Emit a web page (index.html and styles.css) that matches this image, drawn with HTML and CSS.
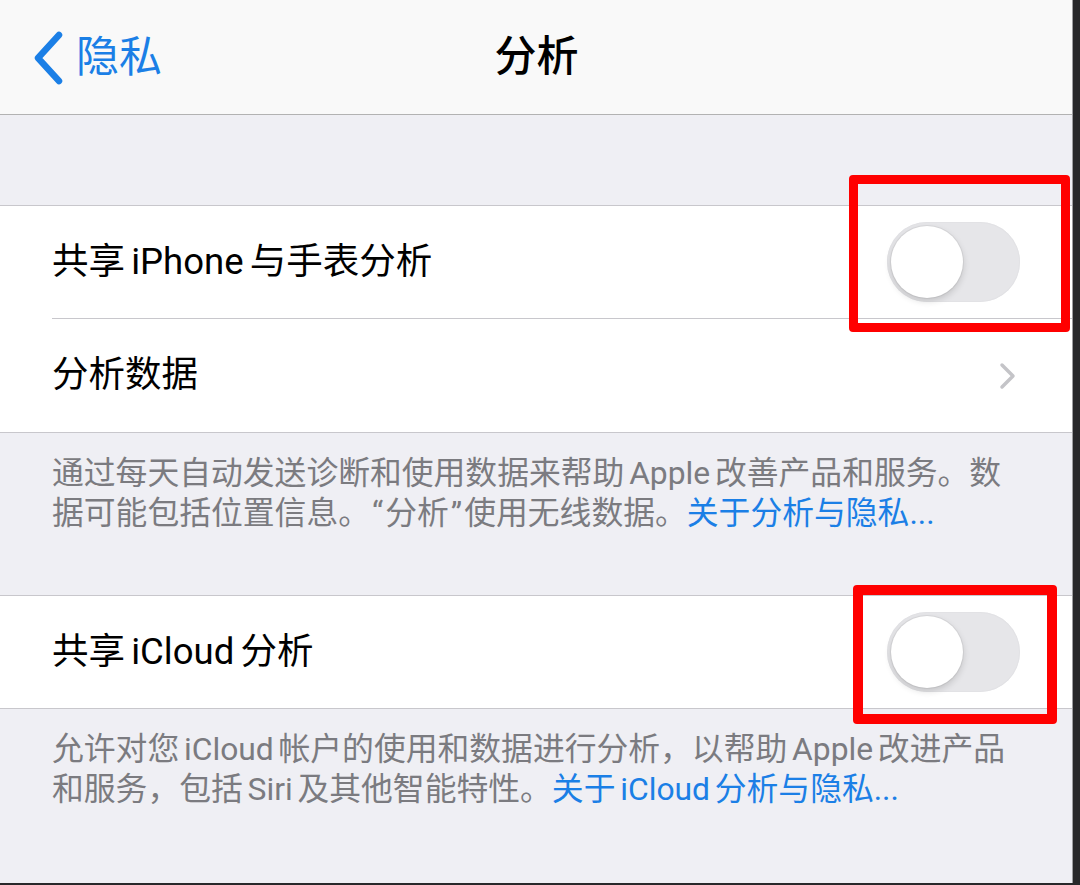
FILE: index.html
```html
<!DOCTYPE html>
<html lang="zh-CN">
<head>
<meta charset="utf-8">
<title>分析</title>
<link rel="stylesheet" href="styles.css">
</head>
<body>
<div class="screen">
  <header class="nav">
    <div class="back">
      <svg class="back-icon" width="32" height="54" viewBox="0 0 32 54"><path d="M27 4 L6 27 L27 50" fill="none" stroke="#1b7fe6" stroke-width="6.5" stroke-linecap="round" stroke-linejoin="round"/></svg>
      <span>隐私</span>
    </div>
    <div class="title">分析</div>
    <div></div>
  </header>
  <div class="spacer"></div>
  <section class="group">
    <div class="row">
      <span>共享<span class="lat">iPhone</span>与手表分析</span>
      <div class="switch"><div class="knob"></div></div>
    </div>
    <div class="row row-tall">
      <span>分析数据</span>
      <svg class="chev" width="18" height="28" viewBox="0 0 18 28"><path d="M3 3 L14 14 L3 25" fill="none" stroke="#c4c4c8" stroke-width="3.5" stroke-linecap="round" stroke-linejoin="round"/></svg>
    </div>
  </section>
  <p class="footer footer-1">通过每天自动发送诊断和使用数据来帮助<span class="lat">Apple</span>改善产品和服务。数<br>据可能包括位置信息。<span class="quote">“</span>分析<span class="quote">”</span>使用无线数据。<span class="link">关于分析与隐私...</span></p>
  <section class="group">
    <div class="row">
      <span>共享<span class="lat">iCloud</span>分析</span>
      <div class="switch"><div class="knob"></div></div>
    </div>
  </section>
  <p class="footer footer-2">允许对您<span class="lat">iCloud</span>帐户的使用和数据进行分析，以帮助<span class="lat">Apple</span>改进产品<br>和服务，包括<span class="lat">Siri</span>及其他智能特性。<span class="link">关于<span class="lat">iCloud</span>分析与隐私...</span></p>

  <div class="mark mark-1"></div>
  <div class="mark mark-2"></div>
</div>
</body>
</html>
```
FILE: styles.css
```css
html, body {
  margin: 0;
  padding: 0;
}
body {
  background: #28282a;
  width: 1080px;
  height: 885px;
  overflow: hidden;
}
.screen {
  position: relative;
  width: 1072px;
  height: 883px;
  background: #efeff4;
  border-right: 1px solid #9d9da0;
  overflow: hidden;
  font-family: "Roboto", "Noto Sans CJK SC", sans-serif;
  color: #000;
}
.nav {
  height: 114px;
  background: #f9f9f9;
  border-bottom: 1px solid #b2b2b2;
  display: grid;
  grid-template-columns: 1fr auto 1fr;
  align-items: center;
}
.back {
  display: flex;
  align-items: center;
  gap: 12px;
  padding-left: 32px;
  color: #1b7fe6;
  font-size: 43px;
  line-height: 1;
}
.back-icon {
  display: block;
  margin-top: 1px;
}
.title {
  font-size: 42px;
  font-weight: 500;
  line-height: 1;
  padding-left: 1px;
}
.spacer {
  height: 90px;
}
.group {
  background: #fff;
  border-top: 1px solid #c8c7cc;
  border-bottom: 1px solid #c8c7cc;
  padding-left: 52px;
}
.row {
  height: 112px;
  display: flex;
  align-items: center;
  justify-content: space-between;
  padding-right: 52px;
  font-size: 36.5px;
  line-height: 1;
}
.row + .row {
  border-top: 1px solid #c8c7cc;
}
.row-tall {
  height: 113px;
}
.lat {
  margin: 0 0.17em;
}
.switch {
  position: relative;
  width: 133px;
  height: 80px;
  border-radius: 40px;
  background: #e6e6e9;
  box-shadow: inset 0 0 0 1px #e2e2e5;
}
.knob {
  position: absolute;
  left: 4px;
  top: 4px;
  width: 72px;
  height: 72px;
  border-radius: 50%;
  background: #fff;
  box-shadow: 0 3px 7px rgba(0, 0, 0, 0.16), 0 0 0 1px rgba(0, 0, 0, 0.05);
}
.chev {
  display: block;
  margin-right: 3px;
}
.footer {
  margin: 0;
  font-size: 31.8px;
  line-height: 40px;
  color: #7b7b80;
  white-space: nowrap;
  padding: 20px 10px 0 52px;
}
.footer-1 {
  height: 142px;
}
.footer .lat {
  margin: 0 0.15em;
}
.quote {
  margin: 0 2px;
}
.link {
  color: #1b7fe6;
}
.mark {
  position: absolute;
  border: 9px solid #ff0000;
  border-radius: 4px;
}
.mark-1 {
  left: 849px;
  top: 175px;
  width: 203px;
  height: 139px;
}
.mark-2 {
  left: 853px;
  top: 585px;
  border-width: 10px;
  width: 184px;
  height: 119px;
}
```
